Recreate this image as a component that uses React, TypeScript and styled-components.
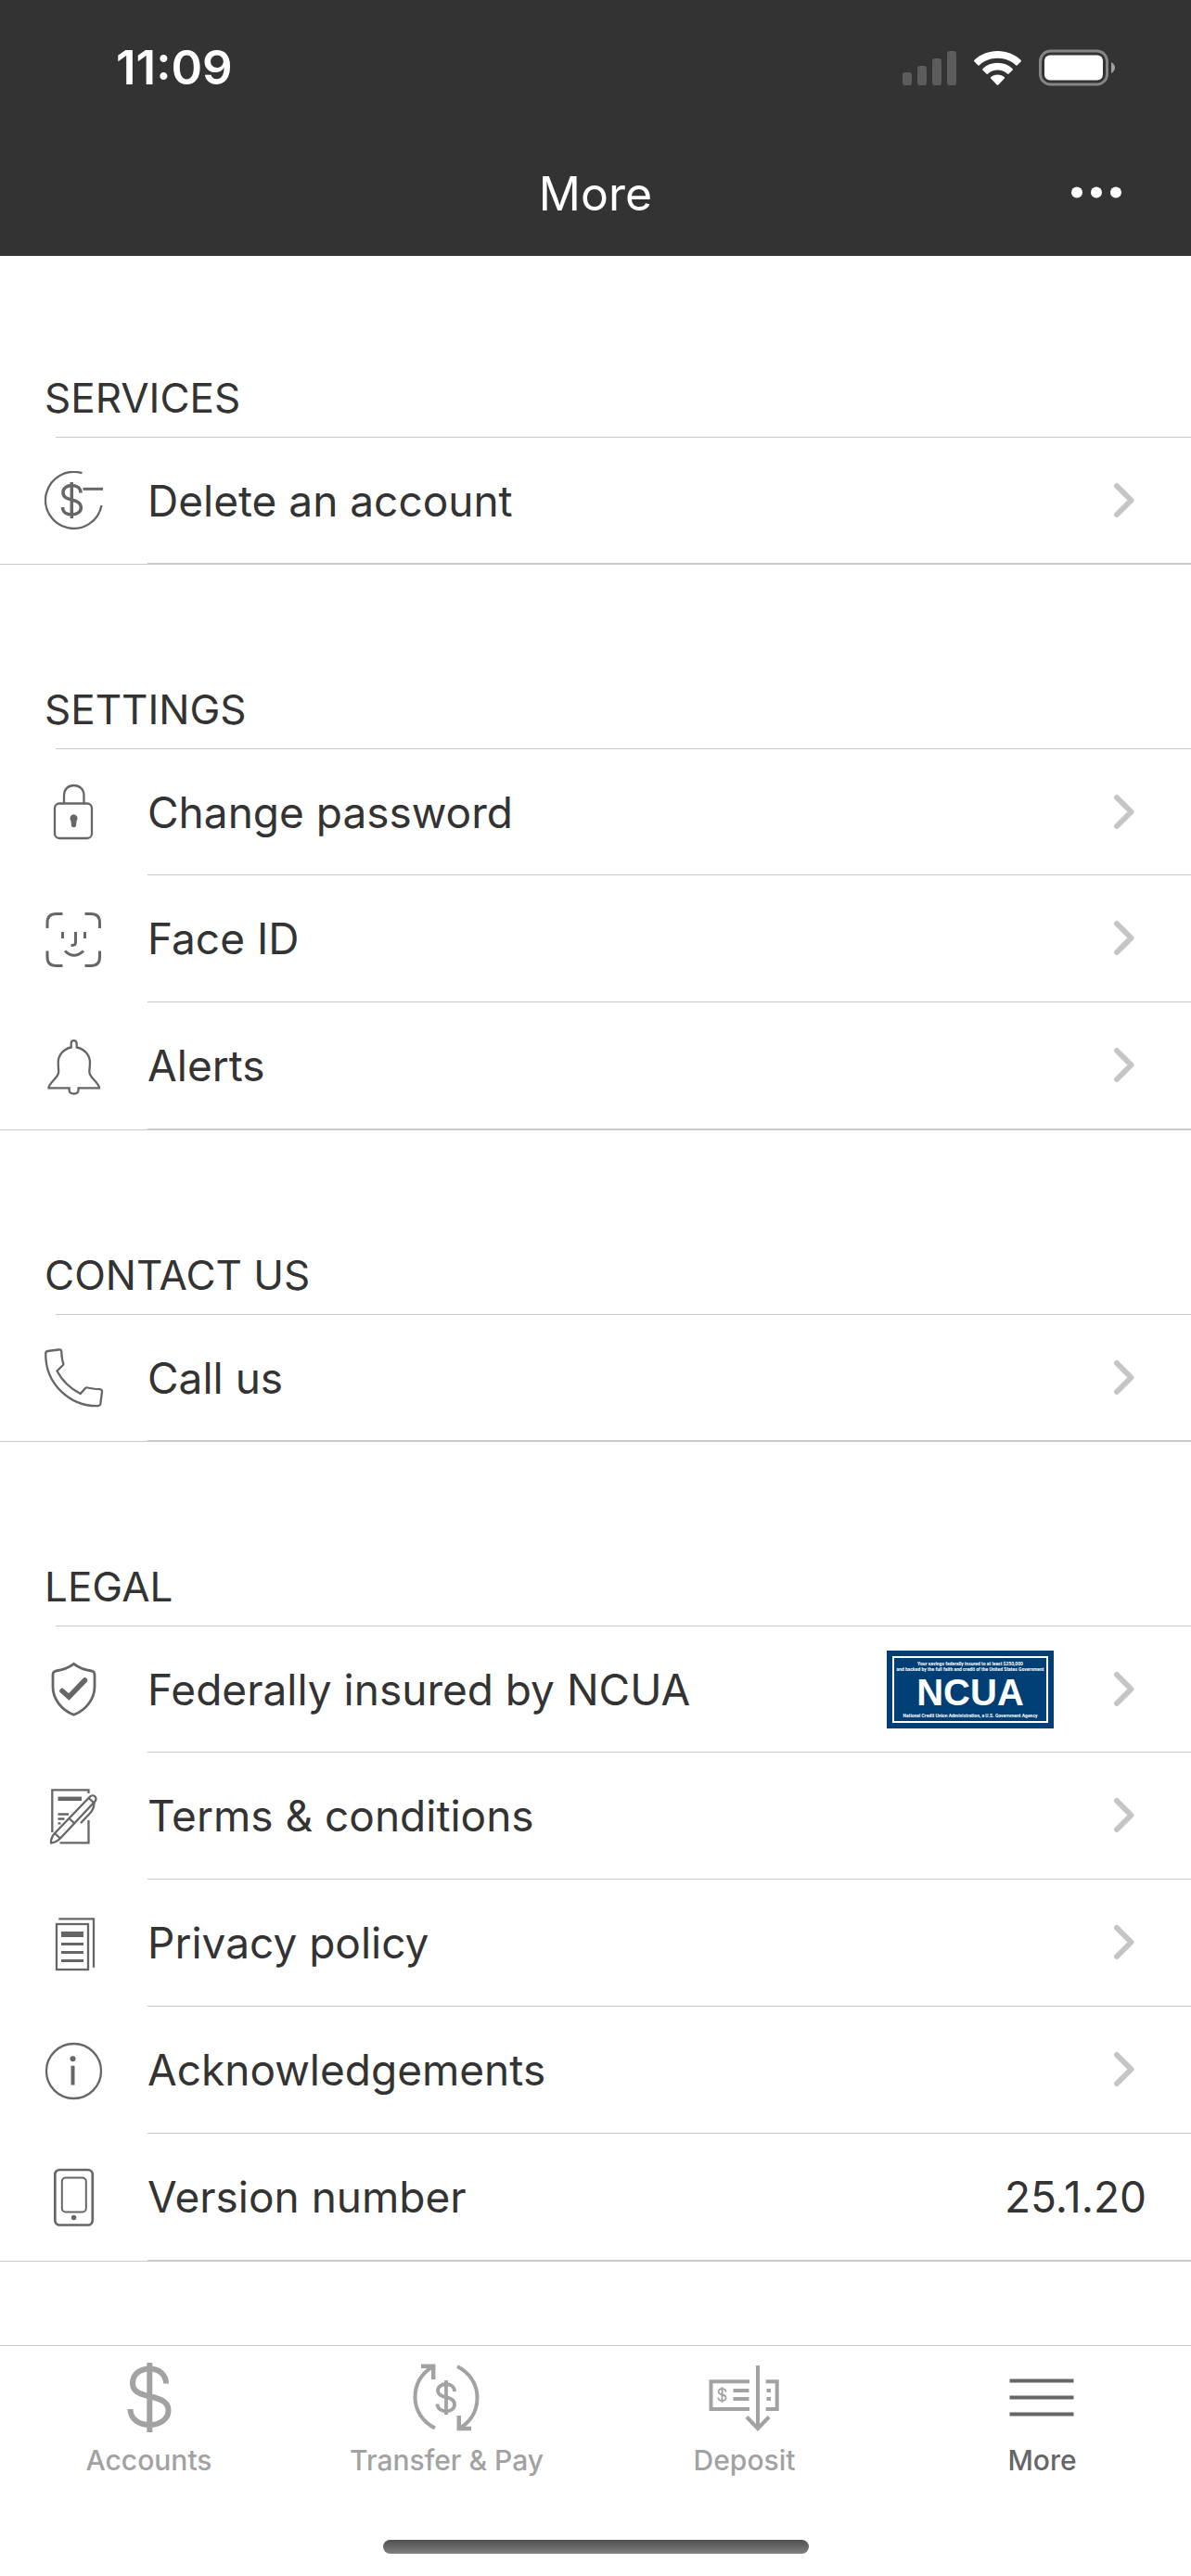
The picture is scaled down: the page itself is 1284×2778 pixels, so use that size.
import React from 'react';
import styled, { createGlobalStyle } from 'styled-components';

const ink = '#333333';
const iconGrey = '#666666';
const muted = '#a2a2a2';
const rule = '#c9c9ca';
const sans = "Inter, 'Liberation Sans', sans-serif";

const GlobalStyle = createGlobalStyle`
  *, *::before, *::after { box-sizing: border-box; }
  body {
    margin: 0;
    background: #ffffff;
    color: ${ink};
    font-family: ${sans};
  }
  button { font: inherit; color: inherit; background: none; border: 0; padding: 0; }
  svg { display: block; flex: none; }
`;

const Page = styled.div`
  min-height: 100vh;
  display: flex;
  flex-direction: column;
`;

const Header = styled.header`
  background: #333333;
  color: #ffffff;
`;

const StatusBar = styled.div`
  height: 141px;
  padding: 4px 81px 0 125px;
  display: flex;
  align-items: center;
  justify-content: space-between;
`;

const Time = styled.time`
  font-size: 51px;
  line-height: 60px;
  font-weight: 600;
`;

const StatusIcons = styled.div`
  display: flex;
  align-items: center;
  gap: 18px;
`;

const NavBar = styled.div`
  height: 135px;
  padding: 0 72px;
  display: grid;
  grid-template-columns: 1fr auto 1fr;
  align-items: center;
`;

const Title = styled.h1`
  grid-column: 2;
  margin: 0;
  font-size: 50px;
  line-height: 60px;
  font-weight: 400;
`;

const MoreButton = styled.button`
  justify-self: end;
  padding: 20px 0;
`;

const Main = styled.main`
  flex: 1;
`;

const Section = styled.section`
  border-bottom: 1px solid ${rule};
  & + & { margin-top: 3px; }
`;

const SectionTitle = styled.h2`
  margin: 0;
  height: 195px;
  padding: 0 48px 15px;
  display: flex;
  align-items: flex-end;
  font-size: 44px;
  line-height: 54px;
  font-weight: 400;
`;

const List = styled.ul`
  list-style: none;
  margin: 0;
  padding: 0;
  &::before {
    content: '';
    display: block;
    height: 1px;
    margin-left: 60px;
    background: ${rule};
  }
`;

const Item = styled.li`
  height: 137px;
  &:first-child { height: 136px; }
`;

const Row = styled.button`
  width: 100%;
  height: 100%;
  padding-left: 48px;
  display: flex;
  align-items: center;
  gap: 47px;
  text-align: left;
`;

const RowBody = styled.span`
  flex: 1;
  align-self: stretch;
  padding-right: 48px;
  display: flex;
  align-items: center;
  border-bottom: 1px solid ${rule};
`;

const Label = styled.span`
  flex: 1;
  font-size: 46px;
  line-height: 58px;
`;

const Value = styled.span`
  font-size: 46px;
  line-height: 58px;
`;

const Badge = styled.span`
  width: 180px;
  height: 84px;
  margin-right: 52px;
  padding: 6px;
  display: flex;
  background: #003f75;
  color: #ffffff;
`;

const BadgeFrame = styled.span`
  flex: 1;
  padding-top: 3px;
  display: flex;
  flex-direction: column;
  align-items: center;
  border: 2px solid #ffffff;
  font-family: Roboto, 'Liberation Sans', sans-serif;
  font-weight: 700;
  white-space: nowrap;
`;

const FinePrint = styled.span`
  font-size: 5px;
  line-height: 6px;
`;

const BadgeName = styled.span`
  font-family: 'Liberation Sans', sans-serif;
  font-size: 40px;
  line-height: 44px;
`;

const Footer = styled.footer`
  border-top: 1px solid ${rule};
  padding: 16px 0 24px;
`;

const Tabs = styled.nav`
  display: grid;
  grid-template-columns: repeat(4, 1fr);
`;

const Tab = styled.a<{ $active?: boolean }>`
  display: flex;
  flex-direction: column;
  align-items: center;
  gap: 9px;
  color: ${p => (p.$active ? iconGrey : muted)};
  text-decoration: none;
  font-size: 30px;
  line-height: 36px;
  font-weight: 500;
`;

const HomeIndicator = styled.div`
  width: 459px;
  height: 15px;
  margin: 68px auto 0;
  border-radius: 8px;
  background: linear-gradient(#4e4f4e, #808080);
`;

const Glyph = styled.svg`
  width: 64px;
  height: 64px;
  fill: none;
  stroke: ${iconGrey};
  stroke-width: 2.3;
`;

const TabGlyph = styled.svg`
  width: 80px;
  height: 80px;
  fill: none;
  stroke: currentColor;
  stroke-width: 4;
`;

const Icon = ({ children }: { children: React.ReactNode }) => (
  <Glyph viewBox="0 0 64 64" aria-hidden="true">{children}</Glyph>
);

const TabIcon = ({ children }: { children: React.ReactNode }) => (
  <TabGlyph viewBox="0 0 80 80" aria-hidden="true">{children}</TabGlyph>
);

const Chevron = () => (
  <svg width="48" height="40" viewBox="0 0 48 40" fill="none" stroke="#c5c5c7" strokeWidth="6" strokeLinecap="round" strokeLinejoin="round" aria-hidden="true">
    <path d="M16 4L31.500 19.500L16 35" />
  </svg>
);

const DeleteIcon = () => (
  <Icon>
    <path d="M40.500 2.200A30.500 30.500 0 1 0 61.500 37" />
    <path d="M41.500 19.300H63" strokeWidth="3" />
    <path d="M29.300 12V51M39 23.500C39 18.500 35 15.500 29.500 15.500C24 15.500 20 18.500 20 23C20 28 23.500 29.500 29.300 31C36 32.700 39.300 34.500 39.300 39.500C39.300 44 35 47 29.500 47C24 47 19.500 44.500 19.500 39" strokeWidth="3.500" />
  </Icon>
);

const LockIcon = () => (
  <Icon>
    <rect x="11" y="22.500" width="40" height="37.500" rx="5" />
    <path d="M21 22.500V14C21 7 25.500 3 31.600 3S42.500 7 42.500 14V22.500" />
    <path d="M31.500 34.300A4.300 4.300 0 0 0 28.500 41.500L29 47Q31.500 49.500 34 47L34.500 41.500A4.300 4.300 0 0 0 31.500 34.300Z" fill={iconGrey} stroke="none" />
  </Icon>
);

const FaceIcon = () => (
  <Icon>
    <g strokeWidth="3">
      <path d="M3 20V14Q3 4.500 12.500 4.500H19.500M43.500 4.500H50Q59.500 4.500 59.500 14V20M59.500 44.500V51Q59.500 60.500 50 60.500H43.500M19.500 60.500H12.500Q3 60.500 3 51V44.500" />
      <path d="M19.500 24V31M43.500 24V31M33.500 24V35.500Q33.500 38.500 28.500 38.500" />
      <path d="M22 44.500Q31.700 54 42 44.500" />
    </g>
  </Icon>
);

const BellIcon = () => (
  <Icon>
    <path d="M28.700 11.500V7.500Q28.700 4.200 31.600 4.200T34.700 7.500V11.500C43 13 49 20 49 28C49 33 48 36 48.500 39C49.500 45 59 50 59 55.300H36.500V57.500Q36.500 61.500 31.600 61.500T26.700 57.500V55.300H4.500C4.500 50 14 45 15 39C15.500 36 14.700 33 14.700 28C14.700 20 20.500 13 28.700 11.500Z" />
  </Icon>
);

const PhoneIcon = () => (
  <Icon>
    <path d="M3.500 3L15.500 1.500Q18 1.200 18.300 3.500C18.500 9 19 13 20.300 16.500Q20.500 17.500 19.800 18.300L13.500 24.500C19 35 27 43 38.700 49L44 43Q45 42 46.500 42.500C51 43.800 55 44 59.500 44.200Q62.300 44.500 62 47L60.300 60Q59.900 62 58 62.200C27 63 1 38 1.200 6Q1.200 3.300 3.500 3Z" />
  </Icon>
);

const ShieldIcon = () => (
  <Icon>
    <path d="M31.600 4.300C37 8.500 44 11 51 12Q54 12.700 54 16V29C54 42 45 54 31.600 59.300C18 54 9 42 9 29V16Q9 12.700 12 12C19 11 26 8.500 31.600 4.300Z" strokeWidth="2.800" />
    <path d="M19 33.500L26.300 40L43.500 22" strokeWidth="5.500" strokeLinecap="round" />
  </Icon>
);

const TermsIcon = () => (
  <Icon>
    <path d="M8.300 49V3.300H47.500V7M47.500 36V60.300H16.500" />
    <path d="M14.500 12.800H40" strokeWidth="4.500" />
    <path d="M14.500 29.500H26M14.500 34.500H21.500M14.500 39.300H17.500" />
    <path d="M7 60.500Q6.500 55 11 50L49 10.500A3.700 3.700 0 0 1 54.500 15.500L17 55.500Q12.500 60 7 60.500Z" strokeLinejoin="round" />
    <path d="M11 50L17 55.500M26.500 34L32.500 39.500M47.500 12L53 17M53.500 17Q53.500 24 48.500 29L39 39" />
  </Icon>
);

const PrivacyIcon = () => (
  <Icon>
    <rect x="13" y="11" width="34" height="49" />
    <path d="M15.300 5.300H53V57.700" />
    <path d="M18 22H42" strokeWidth="6" />
    <path d="M18 32.500H42M18 41.500H42M18 50.500H42" strokeWidth="3" />
  </Icon>
);

const InfoIcon = () => (
  <Icon>
    <circle cx="31.500" cy="32.500" r="29.500" />
    <circle cx="30.500" cy="19.300" r="3" fill={iconGrey} stroke="none" />
    <path d="M30.500 26.700V47.500" strokeWidth="4" />
  </Icon>
);

const DeviceIcon = () => (
  <Icon>
    <rect x="11.300" y="2" width="40.500" height="59.500" rx="5" strokeWidth="2.700" />
    <rect x="18.800" y="10.500" width="26" height="37" rx="4" strokeWidth="2" />
    <circle cx="31.600" cy="53.500" r="2.700" fill={iconGrey} stroke="none" />
  </Icon>
);

const NcuaBadge = () => (
  <Badge>
    <BadgeFrame>
      <FinePrint>Your savings federally insured to at least $250,000</FinePrint>
      <FinePrint>and backed by the full faith and credit of the United States Government</FinePrint>
      <BadgeName>NCUA</BadgeName>
      <FinePrint>National Credit Union Administration, a U.S. Government Agency</FinePrint>
    </BadgeFrame>
  </Badge>
);

type Entry = { label: string; icon: React.ReactNode; extra?: React.ReactNode; value?: string };

const sections: { title: string; entries: Entry[] }[] = [
  { title: 'SERVICES', entries: [{ label: 'Delete an account', icon: <DeleteIcon /> }] },
  {
    title: 'SETTINGS',
    entries: [
      { label: 'Change password', icon: <LockIcon /> },
      { label: 'Face ID', icon: <FaceIcon /> },
      { label: 'Alerts', icon: <BellIcon /> },
    ],
  },
  { title: 'CONTACT US', entries: [{ label: 'Call us', icon: <PhoneIcon /> }] },
  {
    title: 'LEGAL',
    entries: [
      { label: 'Federally insured by NCUA', icon: <ShieldIcon />, extra: <NcuaBadge /> },
      { label: 'Terms & conditions', icon: <TermsIcon /> },
      { label: 'Privacy policy', icon: <PrivacyIcon /> },
      { label: 'Acknowledgements', icon: <InfoIcon /> },
      { label: 'Version number', icon: <DeviceIcon />, value: '25.1.20' },
    ],
  },
];

const EntryRow = ({ label, icon, extra, value }: Entry) => (
  <Item>
    <Row as={value ? 'div' : 'button'}>
      {icon}
      <RowBody>
        <Label>{label}</Label>
        {extra}
        {value ? <Value>{value}</Value> : <Chevron />}
      </RowBody>
    </Row>
  </Item>
);

export default function App() {
  return (
    <Page>
      <GlobalStyle />
      <Header>
        <StatusBar>
          <Time>11:09</Time>
          <StatusIcons>
            <svg width="59" height="40" viewBox="0 0 59 40" fill="#5c5c5c" aria-hidden="true">
              <rect x="0" y="25" width="10" height="14" rx="3" />
              <rect x="16" y="18" width="10" height="21" rx="3" />
              <rect x="32" y="10" width="10" height="29" rx="3" />
              <rect x="48" y="2" width="10" height="37" rx="3" />
            </svg>
            <svg width="52" height="40" viewBox="0 0 52 40" fill="#ffffff" aria-hidden="true">
              <path d="M25.500 2C35 2 44 5.500 50.500 11.800Q51.400 12.700 50.500 13.600L46.800 17.300Q46 18.100 45.100 17.300C40 12.500 33 9.800 25.500 9.800S11 12.500 5.900 17.300Q5 18.100 4.200 17.300L.5 13.600Q-.4 12.700 .5 11.800C7 5.500 16 2 25.500 2Z" />
              <path d="M25.500 14.800C31.500 14.800 37.200 17 41.500 21Q42.400 21.900 41.500 22.800L37.600 26.500Q36.800 27.300 35.900 26.500C33 24 29.500 22.500 25.500 22.500S18 24 15.100 26.500Q14.200 27.300 13.400 26.500L9.500 22.800Q8.600 21.900 9.500 21C13.800 17 19.500 14.800 25.500 14.800Z" />
              <path d="M25.500 27.600C28.300 27.600 30.800 28.500 32.700 30Q33.600 30.800 32.700 31.700L26.500 38.300Q25.500 39.300 24.500 38.300L18.300 31.700Q17.400 30.800 18.300 30C20.200 28.500 22.700 27.600 25.500 27.600Z" />
            </svg>
            <svg width="83" height="40" viewBox="0 0 83 40" aria-hidden="true">
              <rect x="1.500" y="2" width="72" height="36" rx="11" fill="none" stroke="#858585" strokeWidth="3" />
              <rect x="6" y="6.500" width="63" height="27" rx="6" fill="#ffffff" />
              <path d="M78 14Q82 16.500 82 20T78 26Z" fill="#a0a0a0" />
            </svg>
          </StatusIcons>
        </StatusBar>
        <NavBar>
          <Title>More</Title>
          <MoreButton aria-label="More options">
            <svg width="60" height="16" viewBox="0 0 60 16" fill="#ffffff" aria-hidden="true">
              <circle cx="9" cy="6.500" r="6" />
              <circle cx="30" cy="6.500" r="6" />
              <circle cx="51" cy="6.500" r="6" />
            </svg>
          </MoreButton>
        </NavBar>
      </Header>

      <Main>
        {sections.map(section => (
          <Section key={section.title}>
            <SectionTitle>{section.title}</SectionTitle>
            <List>
              {section.entries.map(entry => <EntryRow key={entry.label} {...entry} />)}
            </List>
          </Section>
        ))}
      </Main>

      <Footer>
        <Tabs>
          <Tab href="#accounts">
            <TabIcon>
              <path d="M40.300 2V77M58 24.500C58 14.500 50 8.500 40.300 8.500C30 8.500 22 14.500 22 24C22 32.500 28 35.500 40.300 38.200C54 41.200 60.500 45 60.500 53.500C60.500 63 51 69 40.300 69C29 69 19.500 63 19.500 52" strokeWidth="6" />
            </TabIcon>
            Accounts
          </Tab>
          <Tab href="#transfer">
            <TabIcon>
              <path d="M27 72.500C14 66 5.500 53.500 5.500 39.500C5.500 26 12 14 24 6.500M51 6C64 12.500 72.500 25 72.500 39.500C72.500 53 66 65 54 72.500" />
              <path d="M12 5.700H25.200V20M66 73H52.800V59" strokeWidth="4.500" />
              <path d="M39 21V58M48 33C48 28 44 25 39 25S30 28 30 32C30 36.500 33.500 38 39 39.200C45 40.500 48 42.500 48 47C48 51.500 44 54.300 39 54.300S29.500 51.500 29.500 46.500" strokeWidth="3.800" />
            </TabIcon>
            {'Transfer & Pay'}
          </Tab>
          <Tab href="#deposit">
            <TabIcon>
              <path d="M45 22.300H3.500V52H45M62.700 22.300H74.700V52H62.700" />
              <path d="M54 5V73M42 60.500L54 73L66 60.500" />
              <path d="M27.500 32H44.500M27.500 41H44.500M63.500 32H68M63.500 41H68" />
              <path d="M15.500 28.300V45M19.500 33.500C19.500 31.500 17.800 30.200 15.500 30.200S11.600 31.500 11.600 33.300C11.600 35.300 13 36 15.500 36.500S19.600 38 19.600 39.800C19.600 41.800 18 43 15.500 43S11.400 41.800 11.400 39.500" strokeWidth="1.800" />
            </TabIcon>
            Deposit
          </Tab>
          <Tab href="#more" aria-current="page" $active>
            <TabIcon>
              <path d="M4.500 21.500H73.500M4.500 39.500H73.500M4.500 57.500H73.500" strokeWidth="4" />
            </TabIcon>
            More
          </Tab>
        </Tabs>
        <HomeIndicator />
      </Footer>
    </Page>
  );
}
